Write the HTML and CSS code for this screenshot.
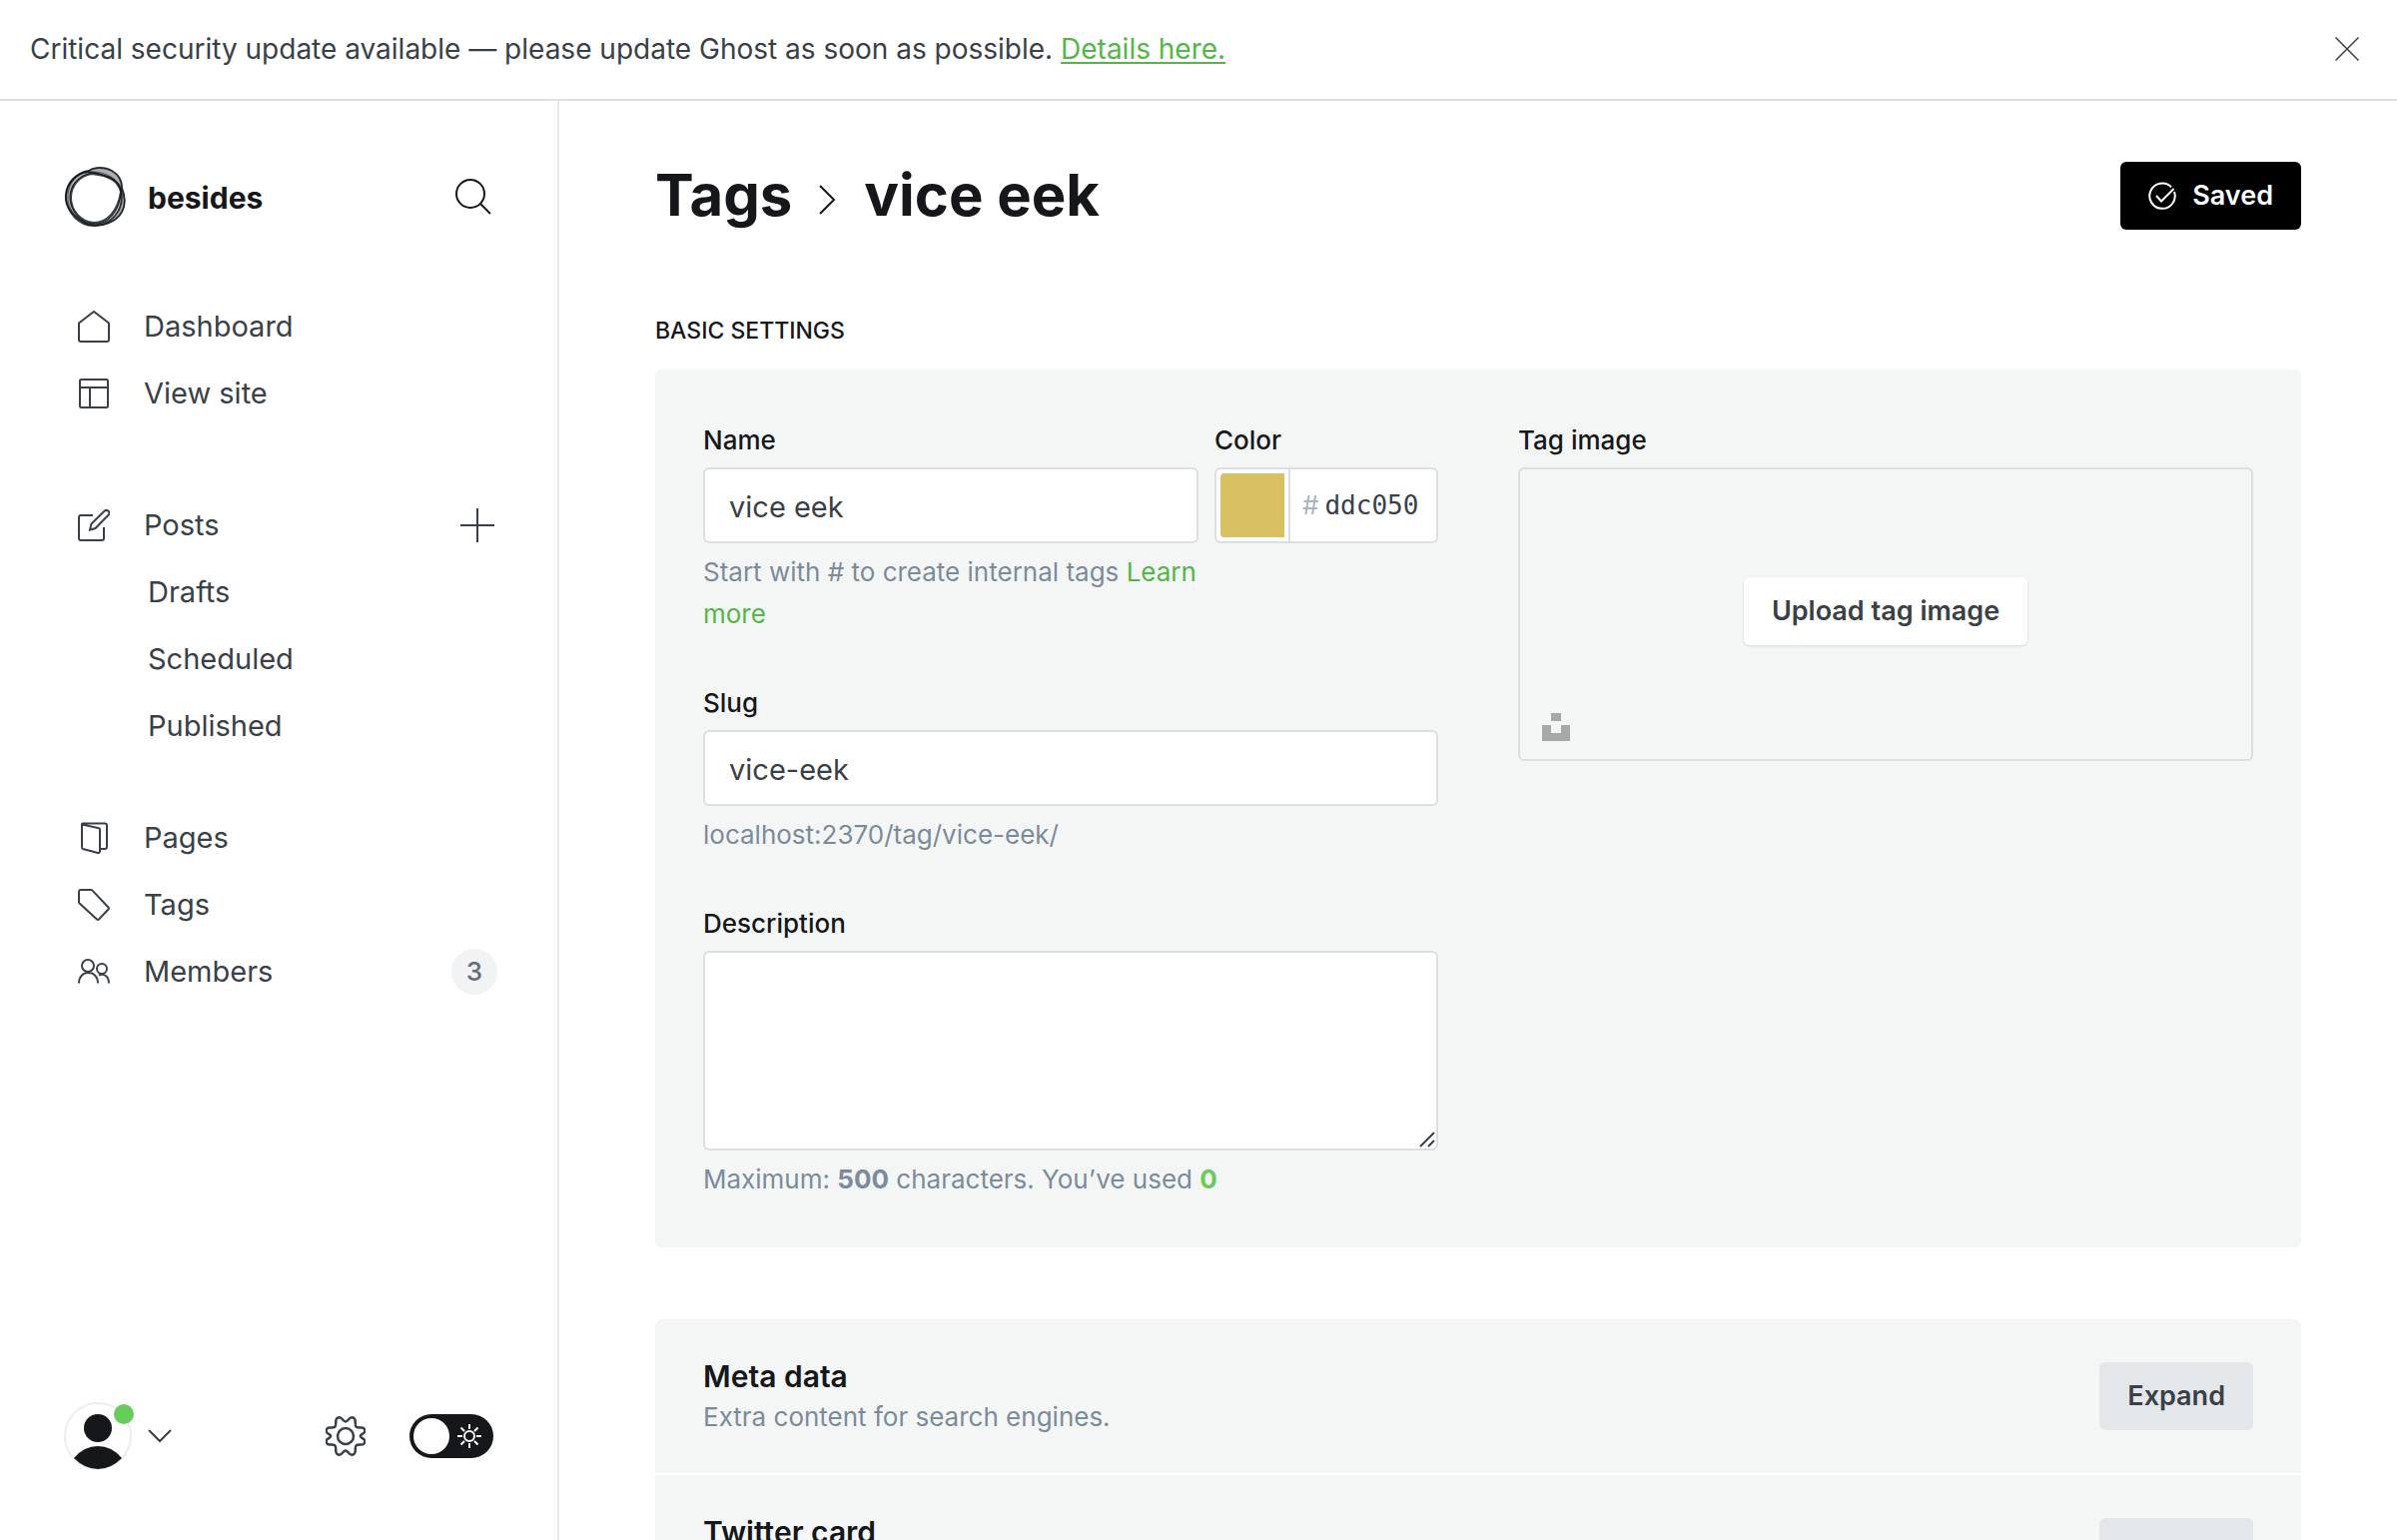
FILE: index.html
```html
<!DOCTYPE html>
<html lang="en">
<head>
<meta charset="utf-8">
<title>Tags - vice eek</title>
<link rel="stylesheet" href="styles.css">
</head>
<body>
<div class="banner">
  <p class="banner-text">Critical security update available — please update Ghost as soon as possible. <a href="#details" class="banner-link">Details here.</a></p>
  <button type="button" class="icon-button" aria-label="Dismiss">
    <svg class="i-close" viewBox="0 0 24 24"><path d="M0.5 0.5l23 23M23.5 0.5l-23 23"/></svg>
  </button>
</div>
<div class="app">
  <nav class="sidebar">
    <header class="site">
      <svg class="logo" viewBox="0 0 60 60">
        <path fill="#15171a" fill-opacity=".35" fill-rule="evenodd" d="M24 4C30 0 40 0 47 4s10 10 10 17c3 8 4 17 0 24-3 6-8 9-13 11-9 4-20 4-28-2C6 47 0 39 1 28 2 16 11 6 24 4zM27 7C14 9 6 19 6 31s9 24 23 25c13 0 24-11 27-31C53 14 45 9 27 7z"/>
        <g fill="none" stroke="#15171a">
          <path stroke-width="1" d="M24 4C30 0 40 0 47 4s10 10 10 17c3 8 4 17 0 24-3 6-8 9-13 11-9 4-20 4-28-2C6 47 0 39 1 28 2 16 11 6 24 4z" opacity=".7"/>
          <path stroke-width="1.500" d="M14 8C22 2 33 7 41 9c10 3 16 10 16 19 1 16-10 30-27 31C15 60 2 47 1 31 1 21 6 13 14 8z" opacity=".8"/>
          <path stroke-width="1" d="M27 6C13 9 5 18 5 31c1 15 12 27 26 26 12 0 22-11 25-29 1-9-5-15-14-18-5-2-9-4-15-4z"/>
          <path stroke-width="1" d="M20 6c12-3 25 1 32 9 6 7 5 17 3 25-3 10-12 16-24 18C16 58 5 47 3 33 2 21 8 9 20 6z" opacity=".6"/>
        </g>
      </svg>
      <span class="site-name">besides</span>
      <button type="button" class="icon-button push" aria-label="Search">
        <svg class="i-search" viewBox="0 0 36 36"><circle cx="15" cy="15" r="14"/><path d="M25 25l10 10"/></svg>
      </button>
    </header>
    <ul class="nav-list">
      <li class="nav-item"><a href="#dashboard" class="nav-link"><svg class="i-nav" viewBox="0 0 32 32"><path d="M1 12.500 16 1l15 11.500V29a2 2 0 0 1-2 2H3a2 2 0 0 1-2-2z"/></svg>Dashboard</a></li>
      <li class="nav-item"><a href="#site" class="nav-link"><svg class="i-nav" viewBox="0 0 32 32"><rect x="2" y="2" width="28" height="28" rx="1.500"/><path d="M2 10h28M12 10v20"/></svg>View site</a></li>
    </ul>
    <ul class="nav-list">
      <li class="nav-item"><a href="#posts" class="nav-link"><svg class="i-nav" viewBox="0 0 32 32"><path d="M15 6H3a2 2 0 0 0-2 2v21a2 2 0 0 0 2 2h21a2 2 0 0 0 2-2V18M12 20.500l1.500-6L26.500 1.800a2.600 2.600 0 0 1 4 4L17.500 19z"/></svg>Posts</a>
        <button type="button" class="icon-button push" aria-label="New post"><svg class="i-plus" viewBox="0 0 36 36"><path d="M18 1v34M1 18h34"/></svg></button></li>
      <li class="nav-item nav-sub"><a href="#drafts" class="nav-link">Drafts</a></li>
      <li class="nav-item nav-sub"><a href="#scheduled" class="nav-link">Scheduled</a></li>
      <li class="nav-item nav-sub"><a href="#published" class="nav-link">Published</a></li>
    </ul>
    <ul class="nav-list">
      <li class="nav-item"><a href="#pages" class="nav-link"><svg class="i-nav" viewBox="0 0 32 32"><path d="M4 1.500h23a2 2 0 0 1 2 2V25a2 2 0 0 1-2 2h-4M4 2.500 20 6a2 2 0 0 1 2 2v21.500a1.500 1.500 0 0 1-2 1.500L5 27a2 2 0 0 1-1-2z"/></svg>Pages</a></li>
      <li class="nav-item"><a href="#tags" class="nav-link"><svg class="i-nav" viewBox="0 0 32 32"><path d="M3 1h10a2 2 0 0 1 1.500.6L30.500 18.500a1.500 1.500 0 0 1 0 2L21 30.500a1.500 1.500 0 0 1-2 0L1.600 14.500A2 2 0 0 1 1 13V3a2 2 0 0 1 2-2z"/></svg>Tags</a></li>
      <li class="nav-item"><a href="#members" class="nav-link"><svg class="i-nav" viewBox="0 0 32 32"><circle cx="10" cy="10" r="6"/><circle cx="24" cy="13" r="5"/><path d="M1 27.500C1 21 5 17 10.500 17S20 21 20 27.500M21 19.500c5-2.500 10 1 10 8"/></svg>Members</a><span class="badge push">3</span></li>
    </ul>
    <footer class="account">
      <button type="button" class="user" aria-label="Account">
        <span class="avatar">
          <svg class="i-avatar" viewBox="0 0 68 68"><circle cx="34" cy="34" r="33" fill="#fff" stroke="#ebedef" stroke-width="2"/><circle cx="34" cy="26" r="14"/><path d="M10 56Q20 44 34 44t24 12Q47 67 34 67T10 56z"/></svg>
          <span class="dot"></span>
        </span>
        <svg class="i-down" viewBox="0 0 24 14"><path d="M1 1l11 11L23 1"/></svg>
      </button>
      <button type="button" class="icon-button push" aria-label="Settings">
        <svg class="i-gear" viewBox="0 0 40 40"><circle cx="20" cy="20" r="8"/><path d="M20 5.500c2.200 0 3.300-3.600 5.500-4.100 2.200-.4 4.100 1 4.200 3.300.1 2.800-.2 5 1 6 1.200 1 3 .6 5.600.8 2.300.2 3.500 2.200 2.800 4.300-.7 2-4.300 2.400-4.300 4.200s3.600 2.200 4.300 4.200c.7 2.100-.5 4.100-2.800 4.300-2.600.2-4.400-.2-5.600.8s-.9 3.200-1 6c-.1 2.300-2 3.700-4.200 3.300-2.200-.5-3.300-4.100-5.500-4.100s-3.300 3.600-5.500 4.100c-2.200.4-4.100-1-4.200-3.300-.1-2.800.2-5-1-6s-3-.6-5.600-.8C1.400 28.300.2 26.300.9 24.200c.7-2 4.300-2.400 4.300-4.200S1.600 17.800.9 15.800c-.7-2.100.5-4.100 2.800-4.300 2.600-.2 4.400.2 5.600-.8s.9-3.200 1-6c.1-2.300 2-3.700 4.200-3.300 2.200.5 3.300 4.100 5.500 4.100z"/></svg>
      </button>
      <label class="toggle">
        <input type="checkbox" class="toggle-input" aria-label="Dark mode">
        <span class="knob"></span>
        <svg class="i-sun" viewBox="0 0 24 24"><circle cx="12" cy="12" r="5"/><path d="M12 0v5M12 19v5M0 12h5M19 12h5M3.500 3.500 7 7M17 17l3.500 3.500M20.500 3.500 17 7M7 17l-3.500 3.500"/></svg>
      </label>
    </footer>
  </nav>
  <main class="main">
    <header class="page-head">
      <h1 class="title"><a href="#tags" class="title-link">Tags</a><svg class="i-right" viewBox="0 0 18 30"><path d="M2 1l14 14L2 29"/></svg>vice eek</h1>
      <button type="button" class="button button-dark"><svg class="i-check" viewBox="0 0 28 28"><path d="M23 5.200A12.700 12.700 0 1 0 26 10M8 14l5 5.500L25.500 7"/></svg>Saved</button>
    </header>
    <h2 class="section-title">Basic settings</h2>
    <section class="panel basic">
      <div class="fields">
        <div class="name-row">
          <div class="field">
            <label class="label" for="name">Name</label>
            <input class="input" id="name" type="text" value="vice eek">
            <p class="help">Start with # to create internal tags <a href="#learn" class="link">Learn more</a></p>
          </div>
          <div class="field">
            <label class="label" for="color">Color</label>
            <div class="color-box">
              <span class="swatch-cell"><span class="swatch"></span></span>
              <span class="hash">#</span>
              <input class="color-input" id="color" type="text" value="ddc050">
            </div>
          </div>
        </div>
        <div class="field">
          <label class="label" for="slug">Slug</label>
          <input class="input" id="slug" type="text" value="vice-eek">
          <p class="help">localhost:2370/tag/vice-eek/</p>
        </div>
        <div class="field">
          <label class="label" for="description">Description</label>
          <div class="area-wrap">
            <textarea class="input area" id="description"></textarea>
            <svg class="i-grip" viewBox="0 0 16 16"><path d="M1 15 15 1M9 15l6-6"/></svg>
          </div>
          <p class="help">Maximum: <b>500</b> characters. You’ve used <b class="count">0</b></p>
        </div>
      </div>
      <div class="field">
        <span class="label">Tag image</span>
        <div class="uploader">
          <button type="button" class="button button-light">Upload tag image</button>
          <button type="button" class="icon-button unsplash" aria-label="Unsplash"><svg class="i-unsplash" viewBox="0 0 28 28"><path d="M9 0h10v8H9zM0 12h9v8h10v-8h9v16H0z"/></svg></button>
        </div>
      </div>
    </section>
    <section class="cards">
      <div class="card">
        <div class="card-copy"><h3 class="card-title">Meta data</h3><p class="card-text">Extra content for search engines.</p></div>
        <button type="button" class="button button-grey">Expand</button>
      </div>
      <div class="card">
        <div class="card-copy"><h3 class="card-title">Twitter card</h3><p class="card-text">Customize structured data for Twitter.</p></div>
        <button type="button" class="button button-grey">Expand</button>
      </div>
    </section>
  </main>
</div>
</body>
</html>
```
FILE: styles.css
```css
* { box-sizing: border-box; }
body {
  margin: 0;
  height: 100vh;
  display: flex;
  flex-direction: column;
  overflow: hidden;
  background: #fff;
  color: #394047;
  font-family: Inter, "Open Sans", sans-serif;
  font-size: 28px;
  line-height: 42px;
}
p, h1, h2, h3, ul { margin: 0; padding: 0; }
ul { list-style: none; }
button, input, textarea { font: inherit; color: inherit; }
button { border: 0; padding: 0; background: none; cursor: pointer; }
svg { display: block; flex: none; fill: none; stroke: currentColor; stroke-width: 2; }
.icon-button { display: flex; }
.push { margin-left: auto; }

.banner {
  flex: none;
  display: flex;
  align-items: center;
  justify-content: space-between;
  height: 101px;
  padding: 0 38px 2px 30px;
  border-bottom: 2px solid #dfe1e1;
}
.banner-link { color: #53b646; text-underline-offset: 3px; text-decoration-thickness: 2px; }
.i-close { width: 24px; height: 24px; stroke-width: 1.5; }

.app { flex: 1; min-height: 0; display: flex; }
.sidebar {
  flex: none;
  width: 560px;
  border-right: 2px solid #e6e8e9;
  padding: 66px 64px 70px 64px;
  display: flex;
  flex-direction: column;
}
.site { display: flex; align-items: center; height: 60px; margin-bottom: 66px; padding-right: 2px; }
.logo { width: 62px; height: 60px; }
.site-name { margin-left: 22px; padding-top: 2px; font-size: 30px; font-weight: 700; color: #15171a; }
.i-search { width: 36px; height: 36px; color: #15171a; }
.nav-list { margin-bottom: 65px; font-size: 29px; }
.nav-list + .nav-list + .nav-list { margin-top: -20px; }
.nav-item { display: flex; align-items: center; height: 67px; }
.nav-link { display: flex; align-items: center; gap: 34px; padding-left: 14px; color: inherit; text-decoration: none; }
.nav-sub .nav-link { padding-left: 84px; }
.i-nav { width: 32px; height: 32px; }
.i-plus { width: 36px; height: 36px; margin-right: -2px; }
.badge {
  width: 46px;
  height: 46px;
  margin-right: -4px;
  border-radius: 23px;
  background: #f1f3f4;
  color: #626d79;
  font-size: 26px;
  font-weight: 500;
  line-height: 46px;
  text-align: center;
}
.account { display: flex; align-items: center; margin-top: auto; }
.user { display: flex; align-items: center; gap: 16px; }
.avatar { position: relative; }
.i-avatar { width: 68px; height: 68px; fill: #15171a; stroke: none; }
.dot { position: absolute; top: 2px; right: -2px; width: 20px; height: 20px; border-radius: 10px; background: #67cc59; }
.i-down { width: 24px; height: 14px; }
.i-gear { width: 40px; height: 40px; stroke-width: 2.5; }
.toggle {
  display: flex;
  align-items: center;
  justify-content: space-between;
  width: 84px;
  height: 44px;
  margin-left: 44px;
  padding: 0 12px 0 4px;
  border-radius: 22px;
  background: #15171a;
  color: #fff;
}
.toggle-input { position: absolute; opacity: 0; }
.knob { width: 36px; height: 36px; border-radius: 18px; background: #fff; }
.i-sun { width: 24px; height: 24px; }

.main { flex: 1; min-width: 0; padding: 61px 96px 0; overflow-y: auto; scrollbar-width: none; }
.page-head { display: flex; align-items: center; justify-content: space-between; height: 68px; }
.title { display: flex; align-items: center; padding-bottom: 2px; color: #15171a; font-size: 58px; line-height: 66px; font-weight: 700; }
.title-link { color: inherit; text-decoration: none; }
.i-right { width: 18px; height: 30px; margin: 10px 28px 0 26px; }
.button {
  display: flex;
  align-items: center;
  justify-content: center;
  height: 68px;
  padding: 0 28px;
  border-radius: 6px;
  font-size: 27px;
  font-weight: 600;
}
.button-dark { gap: 16px; background: #000; color: #fff; }
.button-light { background: #fff; box-shadow: 0 1px 3px rgba(0, 0, 0, .12); }
.button-grey { background: #e3e7ea; }
.i-check { width: 28px; height: 28px; }
.section-title { margin: 80px 0 18px; color: #15171a; font-size: 23px; line-height: 42px; font-weight: 500; text-transform: uppercase; }
.panel { border-radius: 6px; background: #f4f6f6; }
.basic { display: grid; grid-template-columns: 1fr 1fr; gap: 80px; padding: 50px 48px 47px; }
.fields { display: flex; flex-direction: column; gap: 47px; }
.name-row { display: grid; grid-template-columns: 1fr 224px; gap: 16px; }
.label { display: block; margin-bottom: 6px; color: #15171a; font-size: 26px; font-weight: 500; }
.input, .color-box { display: block; width: 100%; height: 76px; border: 2px solid #dcdfdf; border-radius: 6px; background: #fff; }
.input { padding: 2px 24px 0; font-size: 29px; }
.help { margin-top: 8px; color: #7c8b9a; font-size: 26px; }
.help b { font-weight: 700; }
.help .count { color: #67cc59; }
.link { color: #53b646; text-decoration: none; }
.color-box { display: flex; align-items: center; }
.swatch-cell { align-self: stretch; flex: none; display: flex; width: 74px; padding: 4px; border-right: 2px solid #dcdfdf; }
.swatch { flex: 1; border-radius: 4px 0 0 4px; background: #d8c063; }
.hash { margin-left: 12px; color: #abb4be; font-size: 26px; }
.color-input { flex: 1; min-width: 0; margin-left: 6px; padding: 0; border: 0; background: none; font-family: "DejaVu Sans Mono", monospace; font-size: 26px; }
.area-wrap { position: relative; }
.area { height: 200px; padding: 16px 24px; resize: none; }
.i-grip { position: absolute; right: 3px; bottom: 3px; width: 16px; height: 16px; }
.uploader { position: relative; display: flex; align-items: center; justify-content: center; height: 294px; padding-bottom: 6px; border: 2px solid #dcdfdf; border-radius: 6px; }
.unsplash { position: absolute; left: 22px; bottom: 18px; }
.i-unsplash { width: 28px; height: 28px; fill: #a5a9a8; stroke: none; }
.cards { display: flex; flex-direction: column; gap: 2px; margin-top: 72px; border-radius: 6px; overflow: hidden; }
.card { flex: none; display: flex; align-items: center; justify-content: space-between; height: 154px; padding: 0 48px; background: #f4f6f6; }
.card-title { color: #15171a; font-size: 30px; line-height: 42px; font-weight: 600; }
.card-text { color: #7c8b9a; font-size: 26px; line-height: 40px; }
```
